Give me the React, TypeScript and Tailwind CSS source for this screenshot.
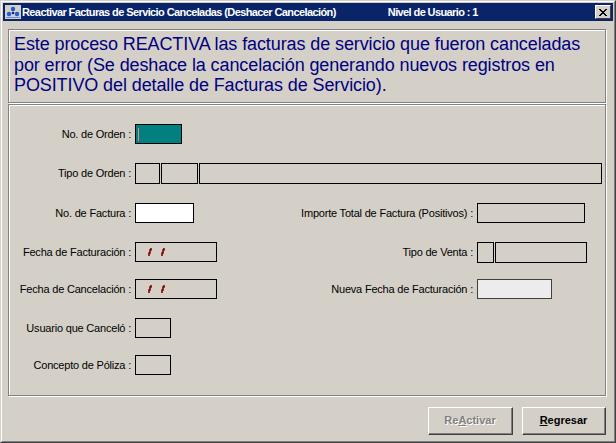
import React from "react";

const field = "h-[20px] border border-black bg-[#d4d0c8]";
const label = "text-[11px] text-black whitespace-nowrap tracking-[-0.2px]";

function Slashes() {
  return (
    <span className="flex items-center gap-[9px] pl-[12px] h-full">
      <svg width="4" height="9" viewBox="0 0 4 9"><path d="M3 0 L3 2 L2 2 L2 5 L1 5 L1 8" stroke="#800000" strokeWidth="1.6" fill="none" /></svg>
      <svg width="4" height="9" viewBox="0 0 4 9"><path d="M3 0 L3 2 L2 2 L2 5 L1 5 L1 8" stroke="#800000" strokeWidth="1.6" fill="none" /></svg>
    </span>
  );
}

export default function App() {
  return (
    <div
      className="w-[616px] h-[443px] bg-[#d4d0c8] border-t border-l border-t-[#d4d0c8] border-l-[#d4d0c8] border-b border-r border-b-[#404040] border-r-[#404040] overflow-hidden"
      style={{ fontFamily: '"Liberation Sans", Arial, sans-serif' }}
    >
      <div className="w-full h-full border-t border-l border-white border-b border-r border-b-[#808080] border-r-[#808080] p-[1px]">
        {/* Title bar */}
        <div className="h-[18px] bg-[#0a246a] flex items-center pl-[2px] pr-[2px] text-white font-bold text-[11px]">
          <svg width="16" height="14" viewBox="0 0 16 14" className="mr-[1px]">
            <rect x="0" y="0" width="16" height="14" fill="#d4d0c8" />
            <circle cx="8" cy="4" r="2.2" fill="#1e5bd6" />
            <circle cx="4" cy="9" r="2.2" fill="#1e5bd6" />
            <circle cx="12" cy="9" r="2.2" fill="#1e5bd6" />
            <circle cx="8" cy="8" r="1.3" fill="#0a246a" />
            <rect x="1" y="12" width="14" height="1" fill="#6b8fd6" />
          </svg>
          <span className="tracking-[-0.6px]">Reactivar Facturas de Servicio Canceladas (Deshacer Cancelación)</span>
          <span className="ml-[52px] tracking-[-0.6px]">Nivel de Usuario : 1</span>
          <div className="ml-auto w-[16px] h-[14px] bg-[#d4d0c8] border-t border-l border-white border-b border-r border-b-[#404040] border-r-[#404040] flex items-center justify-center">
            <svg width="8" height="7" viewBox="0 0 8 7"><path d="M0 0 L7 7 M1 0 L8 7 M7 0 L0 7 M8 0 L1 7" stroke="#000" strokeWidth="1" /></svg>
          </div>
        </div>

        <div className="pl-[5px] pr-[7px] pt-[8px]">
          {/* Description panel */}
          <div className="h-[74px] border border-[#808080] shadow-[inset_1px_1px_0_#fff,1px_1px_0_#fff] pl-[5px] pt-[4px] text-[18px] leading-[20.5px] text-[#000080] tracking-[-0.1px]">
            Este proceso REACTIVA las facturas de servicio que fueron canceladas
            <br />
            por error (Se deshace la cancelación generando nuevos registros en
            <br />
            POSITIVO del detalle de Facturas de Servicio).
          </div>

          {/* Form panel */}
          <div className="mt-[1px] h-[292px] border border-[#808080] shadow-[inset_1px_1px_0_#fff,1px_1px_0_#fff] pl-[1px] pt-[19px]">
            <div className="flex items-center h-[20px]">
              <span className={`${label} w-[125px] text-right pr-[4px]`}>No. de Orden :</span>
              <div className="w-[47px] h-[20px] border border-black bg-[#008080] flex items-center pl-[2px]">
                <div className="w-[1px] h-[13px] bg-[#ff8080]" />
              </div>
            </div>

            <div className="flex items-center h-[20px] mt-[19px]">
              <span className={`${label} w-[125px] text-right pr-[4px]`}>Tipo de Orden :</span>
              <div className={`${field} w-[25px] h-[21px]`} />
              <div className={`${field} w-[37px] h-[21px] ml-[1px]`} />
              <div className={`${field} w-[403px] h-[21px] ml-[1px]`} />
            </div>

            <div className="flex items-center h-[20px] mt-[20px]">
              <div className="flex items-center w-[240px]">
                <span className={`${label} w-[125px] text-right pr-[4px]`}>No. de Factura :</span>
                <div className="w-[59px] h-[20px] border border-black bg-white" />
              </div>
              <span className={`${label} w-[227px] text-right pr-[4px]`}>Importe Total de Factura (Positivos) :</span>
              <div className={`${field} w-[108px]`} />
            </div>

            <div className="flex items-center h-[20px] mt-[19px]">
              <div className="flex items-center w-[240px]">
                <span className={`${label} w-[125px] text-right pr-[4px]`}>Fecha de Facturación :</span>
                <div className={`${field} w-[82px]`}>
                  <Slashes />
                </div>
              </div>
              <span className={`${label} w-[227px] text-right pr-[4px]`}>Tipo de Venta :</span>
              <div className={`${field} w-[17px] h-[21px]`} />
              <div className={`${field} w-[92px] h-[21px] ml-[1px]`} />
            </div>

            <div className="flex items-center h-[20px] mt-[17px]">
              <div className="flex items-center w-[240px]">
                <span className={`${label} w-[125px] text-right pr-[4px]`}>Fecha de Cancelación :</span>
                <div className={`${field} w-[82px]`}>
                  <Slashes />
                </div>
              </div>
              <span className={`${label} w-[227px] text-right pr-[4px]`}>Nueva Fecha de Facturación :</span>
              <div className="w-[75px] h-[20px] border border-[#404040] bg-[#ececec]" />
            </div>

            <div className="flex items-center h-[20px] mt-[19px]">
              <span className={`${label} w-[125px] text-right pr-[4px]`}>Usuario que Canceló :</span>
              <div className={`${field} w-[36px]`} />
            </div>

            <div className="flex items-center h-[20px] mt-[17px]">
              <span className={`${label} w-[125px] text-right pr-[4px]`}>Concepto de Póliza :</span>
              <div className={`${field} w-[36px]`} />
            </div>
          </div>

          {/* Buttons */}
          <div className="flex justify-end gap-[9px] mt-[11px]">
            <div className="w-[85px] h-[28px] border-t border-l border-white border-b border-r border-b-[#404040] border-r-[#404040]">
              <div className="w-full h-full border-b border-r border-[#808080] flex items-center justify-center text-[11px] font-bold text-[#808080] [text-shadow:1px_1px_0_#fff]">
                Re<span className="underline">A</span>ctivar
              </div>
            </div>
            <div className="w-[84px] h-[28px] border-t border-l border-white border-b border-r border-b-[#404040] border-r-[#404040]">
              <div className="w-full h-full border-b border-r border-[#808080] flex items-center justify-center text-[11px] font-bold text-black">
                <span className="underline">R</span>egresar
              </div>
            </div>
          </div>
        </div>
      </div>
    </div>
  );
}
